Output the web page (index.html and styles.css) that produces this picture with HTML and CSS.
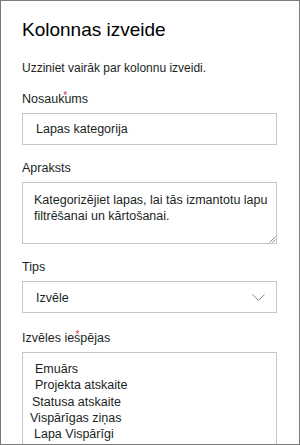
FILE: index.html
```html
<!DOCTYPE html>
<html lang="lv">
<head>
    <meta charset="UTF-8">
    <title>Kolonnas izveide</title>
    <link rel="stylesheet" href="styles.css">
</head>
<body>
    <div class="panel">
        <h2 class="title">Kolonnas izveide</h2>
        <p class="intro">Uzziniet vairāk par kolonnu izveidi.</p>

        <div class="field first">
            <label class="label"><span class="req-at r1">Nosau</span>kums</label>
            <div class="box input">Lapas kategorija</div>
        </div>

        <div class="field">
            <label class="label">Apraksts</label>
            <div class="box textarea">
                Kategorizējiet lapas, lai tās izmantotu lapu filtrēšanai un kārtošanai.
                <svg class="grip" width="9" height="9" viewBox="0 0 9 9">
                    <path d="M8.5 2.5 L2.5 8.5 M8.5 5.5 L5.5 8.5" stroke="#8a8886" stroke-width="1" fill="none"/>
                </svg>
            </div>
        </div>

        <div class="field">
            <label class="label">Tips</label>
            <div class="box select">
                <span>Izvēle</span>
                <svg class="chev" width="13" height="7" viewBox="0 0 13 7">
                    <path d="M0.5 0.5 L6.5 6.5 L12.5 0.5" stroke="#8a8886" stroke-width="1" fill="none"/>
                </svg>
            </div>
        </div>

        <div class="field last">
            <label class="label"><span class="req-at r2">Izvēles ies</span>pējas</label>
            <div class="box choices">
                <div class="opt o1">Emuārs</div>
                <div class="opt o2">Projekta atskaite</div>
                <div class="opt o3">Statusa atskaite</div>
                <div class="opt o4">Vispārīgas ziņas</div>
                <div class="opt o5">Lapa Vispārīgi</div>
            </div>
        </div>
    </div>
</body>
</html>
```

FILE: styles.css
```css
html, body {
    margin: 0;
    padding: 0;
    background: white;
}
.panel {
    width: 300px;
    height: 445px;
    box-sizing: border-box;
    border: 1px solid #7a7a7a;
    padding: 0 22px 0 21px;
    overflow: hidden;
    font-family: "Liberation Sans", Arial, sans-serif;
    color: #201f1e;
}
.title {
    margin: 15px 0 0;
    font-size: 19px;
    font-weight: normal;
    line-height: 28px;
    color: #000;
}
.intro {
    margin: 16px 0 0;
    font-size: 12px;
    line-height: 16px;
}
.field {
    margin-top: 15px;
}
.field.first {
    margin-top: 15px;
}
.field.last {
    margin-top: 17px;
}
.label {
    display: block;
    font-size: 12.5px;
    line-height: 16px;
    margin-bottom: 6px;
}
/* sarkanā zvaigznīte virs burta, kā oriģinālā */
.req-at {
    position: relative;
}
.req-at::after {
    content: "*";
    position: absolute;
    top: -4px;
    color: #d13438;
    font-size: 10px;
}
.r1::after { right: -9px; }
.r2::after { right: 1px; }
.box {
    box-sizing: border-box;
    border: 1px solid #c8c6c4;
    font-size: 12.5px;
    color: #201f1e;
}
.input {
    height: 32px;
    line-height: 30px;
    padding-left: 13px;
}
.textarea {
    position: relative;
    height: 62px;
    line-height: 16px;
    padding: 9px 6px 0 11px;
}
.grip {
    position: absolute;
    right: 0;
    bottom: 0;
}
.select {
    height: 32px;
    display: flex;
    align-items: center;
    justify-content: space-between;
    padding: 1px 11px 0 13px;
}
.choices {
    height: 120px;
    padding-top: 8px;
    line-height: 16.3px;
}
.o1, .o2 { padding-left: 12px; }
.o3 { padding-left: 9px; }
.o4 { padding-left: 7px; }
.o5 { padding-left: 11px; }
```
